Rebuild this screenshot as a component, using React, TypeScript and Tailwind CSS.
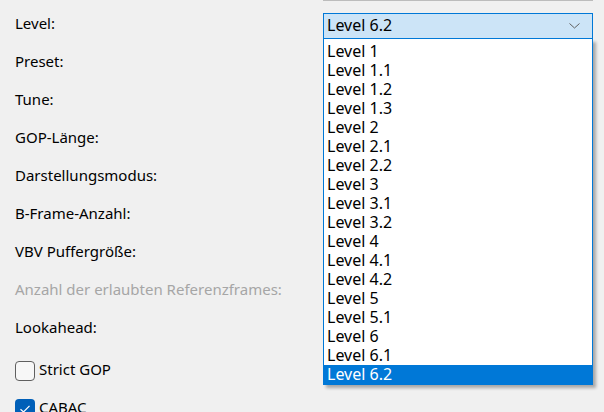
import React from "react";

const levels = [
  "Level 1", "Level 1.1", "Level 1.2", "Level 1.3", "Level 2", "Level 2.1", "Level 2.2",
  "Level 3", "Level 3.1", "Level 3.2", "Level 4", "Level 4.1", "Level 4.2", "Level 5",
  "Level 5.1", "Level 6", "Level 6.1", "Level 6.2",
];

const rows = [
  { label: "Preset:" },
  { label: "Tune:" },
  { label: "GOP-Länge:" },
  { label: "Darstellungsmodus:" },
  { label: "B-Frame-Anzahl:" },
  { label: "VBV Puffergröße:" },
  { label: "Anzahl der erlaubten Referenzframes:", disabled: true },
  { label: "Lookahead:" },
];

function Checkbox({ checked, label }: { checked?: boolean; label: string }) {
  return (
    <div className="flex items-center h-[38px] pl-[15px] gap-[4px]">
      {checked ? (
        <span className="w-[20px] h-[20px] shrink-0 rounded-[4px] bg-[#005fb8] flex items-center justify-center">
          <svg width="12" height="10" viewBox="0 0 12 10" fill="none">
            <path d="M1.5 5.2 L4.5 8 L10.5 1.8" stroke="white" strokeWidth="1.2" />
          </svg>
        </span>
      ) : (
        <span className="w-[20px] h-[20px] shrink-0 rounded-[4px] border border-[#5f5f5f] bg-[#f7f7f7]" />
      )}
      <span className="text-[15px] pb-[3px]">{label}</span>
    </div>
  );
}

export default function App() {
  return (
    <div className="w-[604px] h-[412px] overflow-hidden bg-[#f0f0f0] text-black font-['Segoe_UI','Noto_Sans',sans-serif] relative">
      <div className="flex flex-col -mt-[31px]">
        <div className="flex items-center h-[38px]">
          <div className="w-[323px]" />
          <div className="w-[270px] h-[26px] bg-[#fbfbfb] border border-[#bcbcbc]" />
        </div>
        <div className="flex items-center h-[38px]">
          <span className="w-[323px] pl-[15px] pb-[5px] text-[15px]">Level:</span>
          <div className="w-[270px] h-[26px] bg-[#cce4f7] border border-[#0078d7] flex items-center justify-between pl-[3px] pr-[12px] text-[16px]">
            <span className="pb-[2px]">Level 6.2</span>
            <svg width="11" height="6" viewBox="0 0 11 6" fill="none">
              <path d="M0.5 0.5 L5.5 5 L10.5 0.5" stroke="#606060" strokeWidth="1" />
            </svg>
          </div>
        </div>
        {rows.map((r) => (
          <div key={r.label} className="flex items-center h-[38px]">
            <span className={`w-[323px] pl-[15px] pb-[5px] text-[15px] whitespace-nowrap ${r.disabled ? "text-[#a6a6a6]" : ""}`}>
              {r.label}
            </span>
          </div>
        ))}
        <div className="h-[3px]" />
        <Checkbox label="Strict GOP" />
        <Checkbox checked label="CABAC" />
      </div>

      <ul className="absolute left-[323px] top-[39px] w-[270px] pt-[3px] bg-white border border-[#0078d7] border-t-0 shadow-[3px_3px_3px_rgba(0,0,0,0.3)] text-[16px] leading-[19px]">
        {levels.map((l) => (
          <li
            key={l}
            className={`h-[19px] pl-[3px] ${l === "Level 6.2" ? "bg-[#0078d7] text-white" : ""}`}
          >
            {l}
          </li>
        ))}
      </ul>
    </div>
  );
}
